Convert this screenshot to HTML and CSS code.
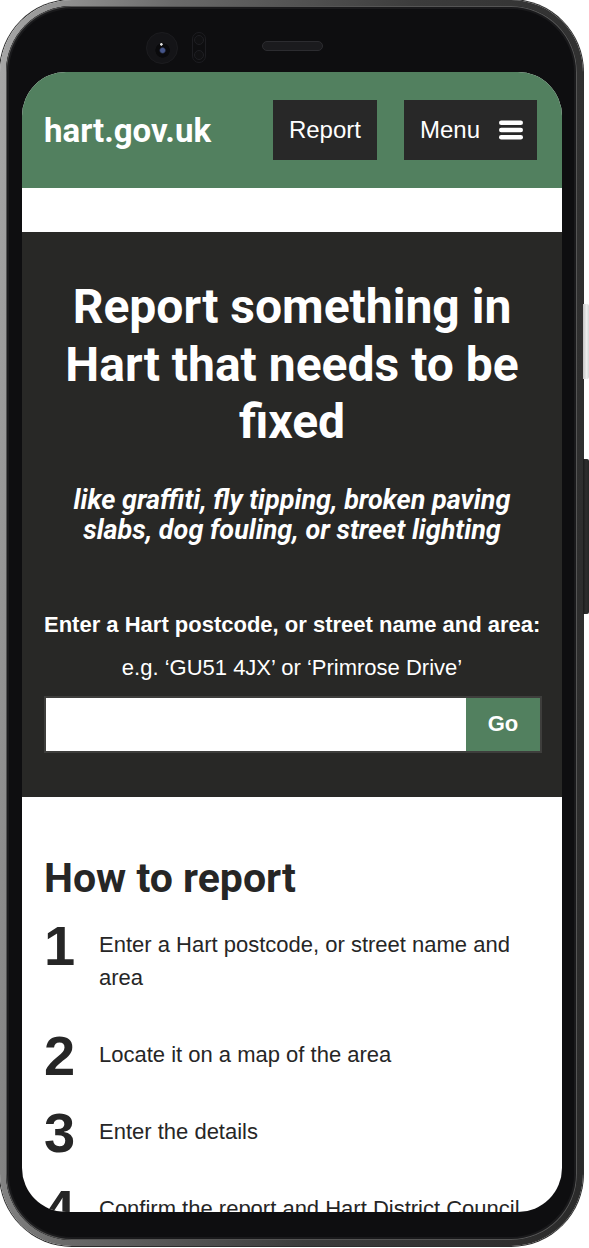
FILE: index.html
```html
<!DOCTYPE html>
<html lang="en">
<head>
<meta charset="utf-8">
<title>Report a problem – hart.gov.uk</title>
<link rel="stylesheet" href="styles.css">
</head>
<body>
<div class="device">
  <div class="phone">
    <div class="phone-top">
      <span class="camera"></span>
      <span class="sensor"><i></i><i></i></span>
      <span class="speaker"></span>
    </div>
    <div class="screen">
      <header class="site-header">
        <a class="logo" href="#">hart.gov.uk</a>
        <nav class="nav">
          <a class="nav-btn" href="#">Report</a>
          <a class="nav-btn menu" href="#">Menu
            <svg class="burger" width="24" height="20" viewBox="0 0 24 20" aria-hidden="true">
              <rect x="0" y="0.5" width="24" height="4.5" rx="2.25" fill="#fff"/>
              <rect x="0" y="7.75" width="24" height="4.5" rx="2.25" fill="#fff"/>
              <rect x="0" y="15" width="24" height="4.5" rx="2.25" fill="#fff"/>
            </svg>
          </a>
        </nav>
      </header>
      <div class="notice"></div>
      <section class="hero">
        <h1 class="hero-title">Report something in Hart that needs to be fixed</h1>
        <p class="hero-lede">like graffiti, fly tipping, broken paving slabs, dog fouling, or street lighting</p>
        <form class="search" action="#">
          <label class="search-label" for="pc">Enter a Hart postcode, or street name and area:</label>
          <p class="search-hint">e.g. ‘GU51 4JX’ or ‘Primrose Drive’</p>
          <div class="search-field">
            <input class="search-input" id="pc" type="text">
            <button class="search-go" type="button">Go</button>
          </div>
        </form>
      </section>
      <section class="how">
        <h2 class="how-title">How to report</h2>
        <ol class="steps">
          <li class="step"><span class="step-num">1</span><span class="step-text">Enter a Hart postcode, or street name and area</span></li>
          <li class="step"><span class="step-num">2</span><span class="step-text">Locate it on a map of the area</span></li>
          <li class="step"><span class="step-num">3</span><span class="step-text">Enter the details</span></li>
          <li class="step"><span class="step-num">4</span><span class="step-text">Confirm the report and Hart District Council will deal with it</span></li>
        </ol>
      </section>
    </div>
  </div>
  <span class="side-btn side-btn-light"></span>
  <span class="side-btn side-btn-dark"></span>
</div>
</body>
</html>
```

FILE: styles.css
```css
* { box-sizing: border-box; }

html, body {
  margin: 0;
  padding: 0;
  background: #ffffff;
}

body {
  width: 589px;
  height: 1248px;
  overflow: hidden;
  font-family: "Liberation Sans", Arial, sans-serif;
}

/* ---------- device frame ---------- */
.device {
  position: relative;
  width: 589px;
  height: 1248px;
}

.phone {
  width: 583px;
  height: 1246px;
  border-radius: 72px;
  border: 6px solid transparent;
  background:
    linear-gradient(#0e0e10, #0e0e10) padding-box,
    linear-gradient(95deg, #a8a8a8 0%, #6a6a6a 25%, #3c3c3c 60%, #2a2a2a 100%) border-box;
  box-shadow: 0 0 0 1px #2e2e2e, inset 0 0 0 1px #555555, inset 0 0 0 3px #1a1a1c;
  padding: 0 15px 0 16px;
}

.phone-top {
  height: 66px;
  display: flex;
  align-items: flex-start;
  padding-left: 124px;
}

.camera {
  width: 32px;
  height: 32px;
  margin-top: 26px;
  border-radius: 50%;
  border: 1px solid #1c1c1f;
  background:
    radial-gradient(circle at 48% 38%, #e0e0e0 0 1px, transparent 1.6px),
    radial-gradient(circle at 52% 58%, #45558a 0 2px, #0a0a0c 3.5px 7px, transparent 7.5px),
    #141417;
}

.sensor {
  width: 14px;
  height: 31px;
  margin-top: 26px;
  margin-left: 14px;
  border-radius: 7px;
  border: 1px solid #1d1d21;
  display: flex;
  flex-direction: column;
  align-items: center;
  justify-content: space-around;
}

.sensor i {
  width: 10px;
  height: 10px;
  border-radius: 50%;
  border: 1px solid #1f1f23;
  background: #111113;
}

.speaker {
  width: 61px;
  height: 10px;
  margin-top: 35px;
  margin-left: 56px;
  border-radius: 5px;
  background: #1b1b1e;
  border: 1px solid #2c2c30;
}

.side-btn {
  position: absolute;
  left: 583px;
  width: 6px;
  border-radius: 0 2px 2px 0;
}

.side-btn-light {
  top: 304px;
  height: 75px;
  background: linear-gradient(90deg, #c4c4c4, #eeeeee 60%, #d6d6d6);
}

.side-btn-dark {
  top: 459px;
  height: 155px;
  background: linear-gradient(90deg, #1a1a1a, #2e2e2e 50%, #262626);
}

/* ---------- screen ---------- */
.screen {
  width: 540px;
  height: 1140px;
  border-radius: 44px;
  overflow: hidden;
  background: #ffffff;
  color: #262626;
}

.site-header {
  height: 116px;
  display: flex;
  align-items: center;
  justify-content: space-between;
  padding: 0 25px 0 22px;
  background: #52805f;
}

.logo {
  font-family: Roboto, "Liberation Sans", sans-serif;
  font-weight: 700;
  font-size: 33px;
  color: #ffffff;
  text-decoration: none;
}

.nav {
  display: flex;
  gap: 27px;
}

.nav-btn {
  height: 60px;
  display: flex;
  align-items: center;
  padding: 0 16px;
  background: #282828;
  color: #ffffff;
  font-size: 24px;
  text-decoration: none;
}

.menu {
  gap: 19px;
  padding-right: 14px;
}

.burger { display: block; }

.notice {
  height: 44px;
  background: #ffffff;
}

/* ---------- hero ---------- */
.hero {
  background: #282826;
  color: #ffffff;
  text-align: center;
  padding: 46px 22px 44px;
}

.hero-title {
  margin: 0;
  font-family: Roboto, "Liberation Sans", sans-serif;
  font-weight: 700;
  font-size: 48px;
  line-height: 57.6px;
}

.hero-lede {
  margin: 34px 0 0;
  font-family: Roboto, "Liberation Sans", sans-serif;
  font-weight: 700;
  font-style: italic;
  font-size: 27px;
  line-height: 30px;
}

.search {
  margin: 63px 0 0;
}

.search-label {
  display: block;
  font-weight: 700;
  font-size: 22px;
  line-height: 33px;
  white-space: nowrap;
}

.search-hint {
  margin: 10px 0 0;
  font-size: 22px;
  line-height: 33px;
}

.search-field {
  margin: 12px -2px 0 0;
  height: 57px;
  display: flex;
  border: 2px solid #3e3e3c;
  background: #ffffff;
}

.search-input {
  flex: 1;
  min-width: 0;
  border: 0;
  margin: 0;
  padding: 0 12px;
  font: 22px "Liberation Sans", Arial, sans-serif;
  background: #ffffff;
  outline: none;
}

.search-go {
  width: 74px;
  border: 0;
  margin: 0;
  background: #52805f;
  color: #ffffff;
  font: 700 22px "Liberation Sans", Arial, sans-serif;
}

/* ---------- how to report ---------- */
.how {
  padding: 57px 22px 0;
}

.how-title {
  margin: 0;
  font-family: Roboto, "Liberation Sans", sans-serif;
  font-weight: 700;
  font-size: 41px;
  line-height: 48px;
}

.steps {
  list-style: none;
  margin: 26px 0 0;
  padding: 0;
}

.step {
  display: flex;
  align-items: flex-start;
  margin-bottom: 44px;
}

.step-num {
  flex: 0 0 55px;
  margin-top: 3px;
  font-weight: 700;
  font-size: 56px;
  line-height: 30px;
}

.step-text {
  font-size: 22px;
  line-height: 33px;
}
```
